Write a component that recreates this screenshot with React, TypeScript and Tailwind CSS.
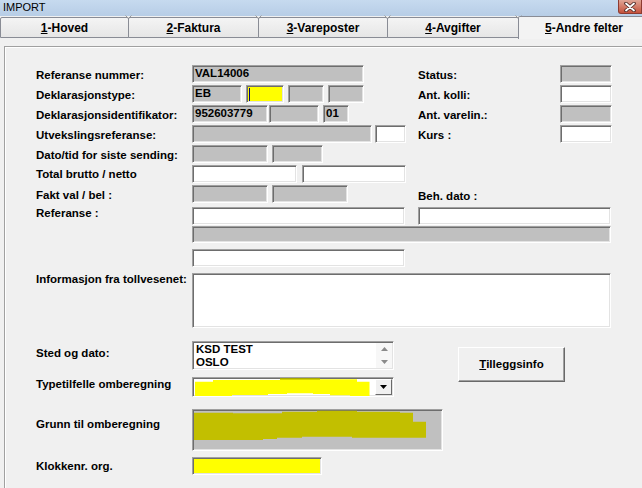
import React from "react";

const sunk =
  "border border-t-[#a0a0a0] border-l-[#a0a0a0] border-b-white border-r-white shadow-[inset_1px_1px_0_#6d6d6d,inset_-1px_-1px_0_#e3e3e3]";
const gray = "bg-[#c0c0c0]";
const white = "bg-white";
const lbl = "text-[11.5px] font-bold leading-[14px] text-black whitespace-nowrap";

function F({ w, c, t, h = "h-[18px]", ml = "" }: { w: string; c: string; t?: string; h?: string; ml?: string }) {
  return (
    <div className={`${sunk} ${c} ${w} ${h} ${ml} flex-none flex items-center pl-[2px] text-[11.5px] font-bold leading-none text-black`}>
      {t}
    </div>
  );
}

function Notch() {
  return (
    <svg className="absolute right-[-4px] top-[-3px]" width="7" height="5" viewBox="0 0 7 5">
      <path d="M0.5 0.5 L3.5 3.5 L6.5 0.5" stroke="#9a9a9a" strokeWidth="1" fill="none" />
    </svg>
  );
}

function Tab({ w, label, u, ml = "-ml-px" }: { w: string; label: string; u: string; ml?: string }) {
  return (
    <div
      className={`relative ${w} ${ml} flex-none h-[21px] border border-[#898c95] rounded-t-[2px] bg-gradient-to-b from-[#f4f4f4] to-[#e6e6e6] flex items-center justify-center text-[12px] font-bold text-black`}
    >
      <span>
        <span className="underline">{u}</span>
        {label}
      </span>
      <Notch />
    </div>
  );
}

export default function App() {
  return (
    <div className="w-[642px] h-[488px] overflow-hidden bg-[#f0f0f0] flex flex-col font-['Liberation_Sans',Arial,sans-serif]">
      {/* Title bar */}
      <div className="h-[16px] flex-none flex items-start justify-between bg-gradient-to-b from-[#c6daef] to-[#b7cde6]">
        <div className="pl-[3px] text-[11px] leading-[15px] text-black">IMPORT</div>
        <div className="w-[24px] h-[14px] rounded-bl-[3px] border border-t-0 border-[#8d3b31] bg-gradient-to-b from-[#dfa596] to-[#c4503b] flex items-center justify-center">
          <svg width="12" height="10" viewBox="0 0 12 10">
            <path d="M2 1.5 L10 8.5 M10 1.5 L2 8.5" stroke="#4b2a26" strokeWidth="3.6" strokeLinecap="round" />
            <path d="M2 1.5 L10 8.5 M10 1.5 L2 8.5" stroke="#ffffff" strokeWidth="1.8" strokeLinecap="round" />
          </svg>
        </div>
      </div>

      {/* Tabs */}
      <div className="h-[22px] flex-none flex items-end">
        <Tab w="w-[129px]" u="1" label="-Hoved" ml="" />
        <Tab w="w-[131px]" u="2" label="-Faktura" />
        <Tab w="w-[130px]" u="3" label="-Vareposter" />
        <Tab w="w-[132px]" u="4" label="-Avgifter" />
        <div className="relative -ml-px w-[140px] flex-none h-[23px] -mb-px border border-b-0 border-[#898c95] rounded-t-[2px] bg-[#f3f3f3] flex items-center justify-center pr-[8px] text-[12px] font-bold text-black">
          <span>
            <span className="underline">5</span>-Andre felter
          </span>
        </div>
      </div>

      {/* Page */}
      <div className="flex-1 pl-[4px] pt-[8px]">
        <div className="h-full border-t border-l border-[#a0a0a0] shadow-[inset_1px_1px_0_#ffffff] pt-[18px] pl-[31px]">
          {/* Row 1 */}
          <div className="flex h-[18px]">
            <div className={`w-[156px] pt-[3px] ${lbl}`}>Referanse nummer:</div>
            <div className="w-[226px] flex">
              <F w="w-[172px]" c={gray} t="VAL14006" />
            </div>
            <div className={`w-[142px] pt-[3px] ${lbl}`}>Status:</div>
            <F w="w-[52px]" c={gray} />
          </div>
          {/* Row 2 */}
          <div className="flex h-[18px] mt-[2px]">
            <div className={`w-[156px] pt-[3px] ${lbl}`}>Deklarasjonstype:</div>
            <div className="w-[226px] flex">
              <F w="w-[50px]" c={gray} t="EB" />
              <div className={`${sunk} bg-[#ffff00] w-[38px] h-[18px] ml-[4px] flex-none flex items-center pl-[2px]`}>
                <div className="w-px h-[13px] bg-[#000080]" />
              </div>
              <F w="w-[36px]" c={gray} ml="ml-[4px]" />
              <F w="w-[36px]" c={gray} ml="ml-[4px]" />
            </div>
            <div className={`w-[142px] pt-[3px] ${lbl}`}>Ant. kolli:</div>
            <F w="w-[52px]" c={white} />
          </div>
          {/* Row 3 */}
          <div className="flex h-[18px] mt-[2px]">
            <div className={`w-[156px] pt-[3px] ${lbl}`}>Deklarasjonsidentifikator:</div>
            <div className="w-[226px] flex">
              <F w="w-[76px]" c={gray} t="952603779" />
              <F w="w-[50px]" c={gray} ml="ml-[1px]" />
              <F w="w-[26px]" c={gray} t="01" ml="ml-[4px]" />
            </div>
            <div className={`w-[142px] pt-[3px] ${lbl}`}>Ant. varelin.:</div>
            <F w="w-[52px]" c={gray} />
          </div>
          {/* Row 4 */}
          <div className="flex h-[18px] mt-[2px]">
            <div className={`w-[156px] pt-[3px] ${lbl}`}>Utvekslingsreferanse:</div>
            <div className="w-[226px] flex">
              <F w="w-[180px]" c={gray} />
              <F w="w-[31px]" c={white} ml="ml-[3px]" />
            </div>
            <div className={`w-[142px] pt-[3px] ${lbl}`}>Kurs :</div>
            <F w="w-[52px]" c={white} />
          </div>
          {/* Row 5 */}
          <div className="flex h-[18px] mt-[2px]">
            <div className={`w-[156px] pt-[3px] ${lbl}`}>Dato/tid for siste sending:</div>
            <F w="w-[76px]" c={gray} />
            <F w="w-[51px]" c={gray} ml="ml-[4px]" />
          </div>
          {/* Row 6 */}
          <div className="flex h-[18px] mt-[2px]">
            <div className={`w-[156px] pt-[2px] ${lbl}`}>Total brutto / netto</div>
            <F w="w-[105px]" c={white} />
            <F w="w-[104px]" c={white} ml="ml-[5px]" />
          </div>
          {/* Row 7 */}
          <div className="flex h-[18px] mt-[2px]">
            <div className={`w-[156px] pt-[3px] ${lbl}`}>Fakt val / bel :</div>
            <div className="w-[226px] flex">
              <F w="w-[76px]" c={gray} />
              <F w="w-[76px]" c={gray} ml="ml-[4px]" />
            </div>
            <div className={`w-[142px] pt-[4px] ${lbl}`}>Beh. dato :</div>
          </div>
          {/* Referanse */}
          <div className="flex h-[18px] mt-[4px]">
            <div className={`w-[156px] -mt-[1px] ${lbl}`}>Referanse :</div>
            <F w="w-[213px]" c={white} />
            <F w="w-[193px]" c={white} ml="ml-[13px]" />
          </div>
          <div className="flex h-[17px] mt-[1px]">
            <div className="w-[156px]" />
            <F w="w-[419px]" c={gray} h="h-[17px]" />
          </div>
          <div className="flex h-[18px] mt-[6px]">
            <div className="w-[156px]" />
            <F w="w-[213px]" c={white} />
          </div>
          {/* Informasjon */}
          <div className="flex h-[55px] mt-[6px]">
            <div className={`w-[156px] -mt-[1px] ${lbl}`}>Informasjon fra tollvesenet:</div>
            <F w="w-[419px]" c={white} h="h-[55px]" />
          </div>
          {/* Sted og dato */}
          <div className="flex h-[29px] mt-[13px] items-start">
            <div className={`w-[156px] pt-[5px] ${lbl}`}>Sted og dato:</div>
            <div className={`${sunk} bg-white w-[202px] h-[29px] flex-none flex`}>
              <div className="flex-1 pl-[3px] pt-[1px] text-[11.5px] font-bold leading-[13px] text-black">
                <div>KSD TEST</div>
                <div>OSLO</div>
              </div>
              <div className="w-[16px] mr-[1px] my-[1px] bg-[#f7f7f7] flex flex-col items-center justify-between py-[4px]">
                <svg width="7" height="4" viewBox="0 0 7 4">
                  <path d="M0 4 L3.5 0 L7 4 Z" fill="#8a8a8a" />
                </svg>
                <svg width="7" height="4" viewBox="0 0 7 4">
                  <path d="M0 0 L3.5 4 L7 0 Z" fill="#8a8a8a" />
                </svg>
              </div>
            </div>
            <div className="ml-[64px] mt-[6px] w-[107px] h-[35px] flex-none border border-t-white border-l-white border-b-[#696969] border-r-[#696969] shadow-[inset_-1px_-1px_0_#a0a0a0] bg-[#f0f0f0] flex items-center justify-center text-[11.5px] font-bold text-black">
              <span>
                <span className="underline">T</span>illeggsinfo
              </span>
            </div>
          </div>
          {/* Typetilfelle */}
          <div className="flex h-[20px] mt-[7px]">
            <div className={`w-[156px] pt-0 ${lbl}`}>Typetilfelle omberegning</div>
            <div className={`${sunk} bg-white w-[202px] h-[20px] flex-none flex items-center`}>
              <svg className="ml-[2px] flex-none" width="175" height="18" viewBox="0 0 175 18">
                <polygon
                  points="0,3.7 18,3.7 18,2 85,2 85,0 125,0 125,1.3 162,1.3 162,3.7 174.5,3.7 174.5,18 155,18 155,17.3 135,17.3 135,16 118,16 118,15.3 92,15.3 92,16 73,16 73,17 37,17 37,18 0,18"
                  fill="#ffff00"
                />
                <rect x="85" y="0" width="40" height="1.5" fill="#a6a600" />
              </svg>
              <div className="ml-auto mr-[1px] w-[17px] h-[16px] border border-t-white border-l-white border-b-[#696969] border-r-[#696969] bg-[#f0f0f0] flex items-center justify-center">
                <svg width="7" height="4" viewBox="0 0 7 4">
                  <path d="M0 0 L3.5 4 L7 0 Z" fill="#000000" />
                </svg>
              </div>
            </div>
          </div>
          {/* Grunn */}
          <div className="flex h-[42px] mt-[12px]">
            <div className={`w-[156px] pt-[8px] ${lbl}`}>Grunn til omberegning</div>
            <div className={`${sunk} ${gray} w-[251px] h-[42px] flex-none`}>
              <svg width="249" height="40" viewBox="0 0 249 40">
                <polygon
                  points="1,2.7 40,2.7 40,3.3 89,3.3 89,1.7 124,1.7 124,0.7 164,0.7 164,1.7 207,1.7 207,2.7 220,2.7 220,11.7 233,11.7 233,27.7 159,27.7 159,26.7 109,26.7 109,27.7 84,27.7 84,29 70,29 70,30 1,30"
                  fill="#c2bf00"
                />
              </svg>
            </div>
          </div>
          {/* Klokkenr */}
          <div className="flex h-[18px] mt-[6px]">
            <div className={`w-[156px] pt-[2px] ${lbl}`}>Klokkenr. org.</div>
            <F w="w-[130px]" c="bg-[#ffff00]" />
          </div>
        </div>
      </div>
    </div>
  );
}
